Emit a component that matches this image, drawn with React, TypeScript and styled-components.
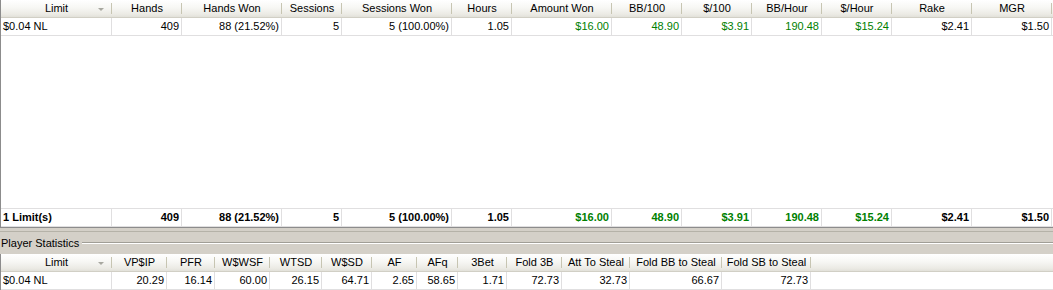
import * as React from 'react';
import styled, { createGlobalStyle } from 'styled-components';

const GlobalStyle = createGlobalStyle`
  html, body {
    margin: 0;
    padding: 0;
    background: #d4d0c8;
  }
  body {
    font-family: 'Liberation Sans', Arial, sans-serif;
    font-size: 11px;
    color: #000;
    width: 1053px;
    height: 290px;
    overflow: hidden;
  }
`;

type Col = { title: string; width: number; left?: boolean; sort?: boolean };
type Cell = { text: string; green?: boolean };

const Page = styled.div`
  display: flex;
  flex-direction: column;
  height: 290px;
`;

const Grid = styled.div<{ $height?: number }>`
  display: flex;
  flex-direction: column;
  background: #fff;
  border-left: 1px solid #8c8c8c;
  height: ${p => (p.$height ? `${p.$height}px` : 'auto')};
  box-sizing: border-box;
`;

const TopGrid = styled(Grid)`
  border-bottom: 1px solid #8c8c8c;
`;

const Row = styled.div`
  display: flex;
  flex-shrink: 0;
`;

const HeaderRow = styled(Row)`
  height: 18px;
  background: linear-gradient(#ffffff 0%, #f7f7f4 45%, #ebeae4 85%, #e2e1d9 100%);
  border-bottom: 1px solid #d1cfc5;
  box-sizing: border-box;
`;

const HeaderCell = styled.div<{ $w: number }>`
  position: relative;
  width: ${p => p.$w}px;
  flex-shrink: 0;
  line-height: 17px;
  text-align: center;
  white-space: nowrap;
  &::after {
    content: '';
    position: absolute;
    right: 0;
    top: 3px;
    bottom: 3px;
    width: 1px;
    background: #c7c5b2;
  }
`;

const SortArrow = styled.span`
  position: absolute;
  right: 8px;
  top: 8px;
  width: 0;
  height: 0;
  border-left: 3px solid transparent;
  border-right: 3px solid transparent;
  border-top: 3px solid #a8a8a0;
`;

const DataRow = styled(Row)<{ $bold?: boolean; $top?: boolean }>`
  height: ${p => (p.$top ? 19 : 18)}px;
  border-top: ${p => (p.$top ? '1px solid #e0dfe0' : 'none')};
  border-bottom: 1px solid #e0dfe0;
  box-sizing: border-box;
  font-weight: ${p => (p.$bold ? 'bold' : 'normal')};
`;

const DataCell = styled.div<{ $w: number; $left?: boolean; $green?: boolean }>`
  width: ${p => p.$w}px;
  flex-shrink: 0;
  box-sizing: border-box;
  border-right: 1px solid #e0dfe0;
  line-height: 17px;
  padding: ${p => (p.$left ? '0 0 0 2px' : '0 2px 0 0')};
  text-align: ${p => (p.$left ? 'left' : 'right')};
  color: ${p => (p.$green ? '#008000' : '#000')};
  white-space: nowrap;
  overflow: hidden;
`;

const Spacer = styled.div`
  flex: 1;
`;

const Band = styled.div`
  height: 26px;
  flex-shrink: 0;
  display: flex;
  flex-direction: column;
`;

const Splitter = styled.div`
  height: 3px;
  border-bottom: 1px solid #b5b2a8;
  flex-shrink: 0;
`;

const GroupTitle = styled.div`
  display: flex;
  align-items: center;
  height: 12px;
  margin-top: 5px;
  padding-left: 1px;
  color: #000;
  white-space: nowrap;
  &::after {
    content: '';
    flex: 1;
    margin-left: 3px;
    height: 0;
    border-top: 1px solid #a09e96;
    border-bottom: 1px solid #fff;
  }
`;

const statsCols: Col[] = [
  { title: 'Limit', width: 111, left: true, sort: true },
  { title: 'Hands', width: 70 },
  { title: 'Hands Won', width: 100 },
  { title: 'Sessions', width: 60 },
  { title: 'Sessions Won', width: 110 },
  { title: 'Hours', width: 60 },
  { title: 'Amount Won', width: 100 },
  { title: 'BB/100', width: 70 },
  { title: '$/100', width: 70 },
  { title: 'BB/Hour', width: 70 },
  { title: '$/Hour', width: 70 },
  { title: 'Rake', width: 80 },
  { title: 'MGR', width: 80 },
];

const statsRow: Cell[] = [
  { text: '$0.04 NL' },
  { text: '409' },
  { text: '88 (21.52%)' },
  { text: '5' },
  { text: '5 (100.00%)' },
  { text: '1.05' },
  { text: '$16.00', green: true },
  { text: '48.90', green: true },
  { text: '$3.91', green: true },
  { text: '190.48', green: true },
  { text: '$15.24', green: true },
  { text: '$2.41' },
  { text: '$1.50' },
];

const totalRow: Cell[] = [{ text: '1 Limit(s)' }, ...statsRow.slice(1)];

const playerCols: Col[] = [
  { title: 'Limit', width: 111, left: true, sort: true },
  { title: 'VP$IP', width: 55 },
  { title: 'PFR', width: 48 },
  { title: 'W$WSF', width: 55 },
  { title: 'WTSD', width: 52 },
  { title: 'W$SD', width: 50 },
  { title: 'AF', width: 45 },
  { title: 'AFq', width: 41 },
  { title: '3Bet', width: 49 },
  { title: 'Fold 3B', width: 55 },
  { title: 'Att To Steal', width: 68 },
  { title: 'Fold BB to Steal', width: 92 },
  { title: 'Fold SB to Steal', width: 89 },
];

const playerRow: Cell[] = [
  '$0.04 NL', '20.29', '16.14', '60.00', '26.15', '64.71', '2.65',
  '58.65', '1.71', '72.73', '32.73', '66.67', '72.73',
].map(text => ({ text }));

const Header: React.FC<{ cols: Col[] }> = ({ cols }) => (
  <HeaderRow>
    {cols.map(c => (
      <HeaderCell key={c.title} $w={c.width}>
        {c.title}
        {c.sort && <SortArrow />}
      </HeaderCell>
    ))}
  </HeaderRow>
);

const Line: React.FC<{ cols: Col[]; cells: Cell[]; bold?: boolean; top?: boolean }> = ({
  cols,
  cells,
  bold,
  top,
}) => (
  <DataRow $bold={bold} $top={top}>
    {cols.map((c, i) => (
      <DataCell key={c.title} $w={c.width} $left={c.left} $green={cells[i].green}>
        {cells[i].text}
      </DataCell>
    ))}
  </DataRow>
);

const App: React.FC = () => (
  <>
    <GlobalStyle />
    <Page>
      <TopGrid $height={229}>
        <Header cols={statsCols} />
        <Line cols={statsCols} cells={statsRow} />
        <Spacer />
        <Line cols={statsCols} cells={totalRow} bold top />
      </TopGrid>
      <Band>
        <Splitter />
        <GroupTitle>Player Statistics</GroupTitle>
      </Band>
      <Grid>
        <Header cols={playerCols} />
        <Line cols={playerCols} cells={playerRow} />
      </Grid>
    </Page>
  </>
);

export default App;
